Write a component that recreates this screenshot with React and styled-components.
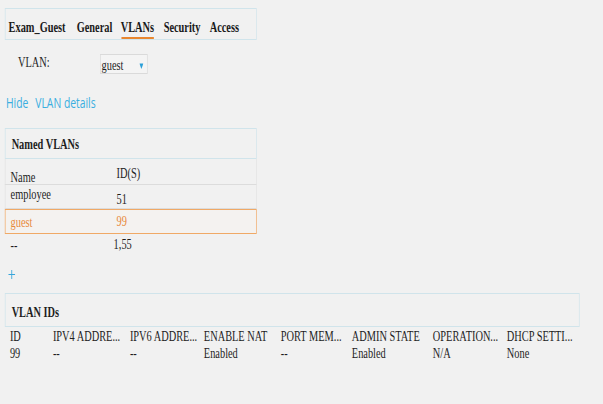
import React from "react";
import styled, { createGlobalStyle } from "styled-components";

// the reference is a horizontally squeezed capture: the page is laid out
// wider and then compressed along x only. u() turns a measured x into layout px.
const SQUEEZE = 0.69;
const u = (x) => Math.round((x / SQUEEZE) * 10) / 10;

const Global = createGlobalStyle`
  html, body {
    margin: 0;
    padding: 0;
    background: #f1f1f1;
    overflow: hidden;
  }
  body {
    font-family: "Liberation Serif", "Times New Roman", serif;
    color: #1e1e1e;
  }
`;

const Page = styled.div`
  width: ${u(603)}px;
  height: 404px;
  padding: 8px 0 0 ${u(5)}px;
  box-sizing: border-box;
  overflow: hidden;
  transform: scaleX(${SQUEEZE});
  transform-origin: 0 0;
  font-family: "Liberation Serif", "Times New Roman", serif;
  font-size: 15px;
`;

const TabBar = styled.div`
  width: ${u(252)}px;
  height: 32px;
  box-sizing: border-box;
  border: 1px solid #d0e4eb;
  display: grid;
  grid-template-columns: ${u(68)}px ${u(44)}px ${u(43)}px ${u(46)}px auto;
  padding-left: ${u(3)}px;
`;

const Tab = styled.div`
  display: flex;
  align-items: stretch;
  font-weight: bold;
  color: #1a1a1a;
  white-space: nowrap;
`;

const TabLabel = styled.span`
  position: relative;
  display: flex;
  align-items: center;
  padding-top: 7px;
  &::after {
    content: "";
    display: ${(p) => (p.$active ? "block" : "none")};
    position: absolute;
    left: 1px;
    right: 0;
    bottom: 0;
    height: 2px;
    background: #e8862e;
  }
`;

const FieldRow = styled.div`
  display: flex;
  align-items: center;
  height: 20px;
  margin-top: 14px;
  padding-left: ${u(13)}px;
`;

const FieldLabel = styled.div`
  width: ${u(82)}px;
  margin-top: -3px;
`;

const Select = styled.div`
  width: ${u(48)}px;
  height: 20px;
  box-sizing: border-box;
  border: 1px solid #dadada;
  background: #f4f4f4;
  display: flex;
  align-items: center;
  justify-content: space-between;
  padding: 3px ${u(4)}px 0 ${u(1)}px;
`;

const DetailsLink = styled.div`
  margin-top: 18px;
  height: 20px;
  display: flex;
  align-items: center;
  gap: ${u(7)}px;
  padding-left: ${u(1)}px;
  font-family: "Open Sans", "Noto Sans", sans-serif;
  font-size: 15px;
  color: #3aaee0;
`;

const Card = styled.div`
  width: ${(p) => u(p.$w)}px;
  margin-top: ${(p) => p.$top}px;
`;

const CardHead = styled.div`
  height: ${(p) => p.$h}px;
  box-sizing: border-box;
  border: 1px solid #d0e4eb;
  display: flex;
  align-items: center;
  padding: ${(p) => p.$pt}px 0 0 ${u(6)}px;
  font-weight: bold;
`;

const lineColor = (p, normal) =>
  p.$sel ? "#f0a966" : p.$plain ? "transparent" : normal;

const Row = styled.div`
  display: grid;
  grid-template-columns: ${u(106)}px 1fr;
  height: ${(p) => p.$h}px;
  box-sizing: border-box;
  padding-left: ${u(5)}px;
  border-left: 1px solid ${(p) => lineColor(p, "#e2e2e2")};
  border-right: 1px solid ${(p) => lineColor(p, "#e2e2e2")};
  border-bottom: 1px solid ${(p) => lineColor(p, "#dcdcdc")};
  border-top: ${(p) => (p.$sel ? "1px solid #f0a966" : "none")};
  background: ${(p) => (p.$sel ? "#f4f2f0" : "transparent")};
  color: ${(p) => (p.$sel ? "#e8893a" : "#1e1e1e")};
`;

const Cell = styled.div`
  display: flex;
  align-items: center;
  padding-top: ${(p) => (p.$dy > 0 ? p.$dy : 0)}px;
  padding-bottom: ${(p) => (p.$dy < 0 ? -p.$dy : 0)}px;
  margin-left: ${(p) => u(p.$dx || 0)}px;
  white-space: nowrap;
`;

const AddButton = styled.div`
  margin-top: 8px;
  height: 20px;
  width: ${u(8)}px;
  display: flex;
  align-items: center;
  justify-content: center;
  margin-left: ${u(3)}px;
`;

const IdGrid = styled.div`
  display: grid;
  grid-template-columns: ${[43, 77, 74, 77, 71, 81, 74].map((w) => u(w) + "px").join(" ")} 1fr;
  padding-left: ${u(5)}px;
  margin-top: 1px;
  line-height: 17px;
  white-space: nowrap;
`;

const Caret = () => (
  <svg width={u(4)} height="6" viewBox="0 0 6 6" preserveAspectRatio="none">
    <polygon points="0,0.5 6,0.5 3,6" fill="#2a9fd8" />
  </svg>
);

const Plus = () => (
  <svg width={u(7)} height="9" viewBox="0 0 10 9" preserveAspectRatio="none">
    <path d="M5 0V9M0 4.5H10" stroke="#36a5db" strokeWidth="1.2" fill="none" />
  </svg>
);

const tabs = ["Exam_Guest", "General", "VLANs", "Security", "Access"];

const cols = [
  ["ID", "99"],
  ["IPV4 ADDRE...", "--"],
  ["IPV6 ADDRE...", "--"],
  ["ENABLE NAT", "Enabled"],
  ["PORT MEM...", "--"],
  ["ADMIN STATE", "Enabled"],
  ["OPERATION...", "N/A"],
  ["DHCP SETTI...", "None"],
];

export default function App() {
  return (
    <Page>
      <Global />
      <TabBar>
        {tabs.map((t) => (
          <Tab key={t}>
            <TabLabel $active={t === "VLANs"}>{t}</TabLabel>
          </Tab>
        ))}
      </TabBar>

      <FieldRow>
        <FieldLabel>VLAN:</FieldLabel>
        <Select>
          <span>guest</span>
          <Caret />
        </Select>
      </FieldRow>

      <DetailsLink>
        <span>Hide</span>
        <span>VLAN details</span>
      </DetailsLink>

      <Card $w={252} $top={16}>
        <CardHead $h={31} $pt={2}>Named VLANs</CardHead>
        <Row $h={26}>
          <Cell $dy={10}>Name</Cell>
          <Cell $dy={2}>ID(S)</Cell>
        </Row>
        <Row $h={24}>
          <Cell $dy={-4}>employee</Cell>
          <Cell $dy={6}>51</Cell>
        </Row>
        <Row $sel $h={25}>
          <Cell $dy={2}>guest</Cell>
          <Cell>99</Cell>
        </Row>
        <Row $plain $h={22}>
          <Cell $dy={2}>--</Cell>
          <Cell $dx={-3}>1,55</Cell>
        </Row>
      </Card>

      <AddButton>
        <Plus />
      </AddButton>

      <Card $w={575} $top={9}>
        <CardHead $h={34} $pt={4}>VLAN IDs</CardHead>
      </Card>
      <IdGrid>
        {cols.map(([h]) => (
          <div key={h}>{h}</div>
        ))}
        {cols.map(([h, v]) => (
          <div key={h + "v"}>{v}</div>
        ))}
      </IdGrid>
    </Page>
  );
}
